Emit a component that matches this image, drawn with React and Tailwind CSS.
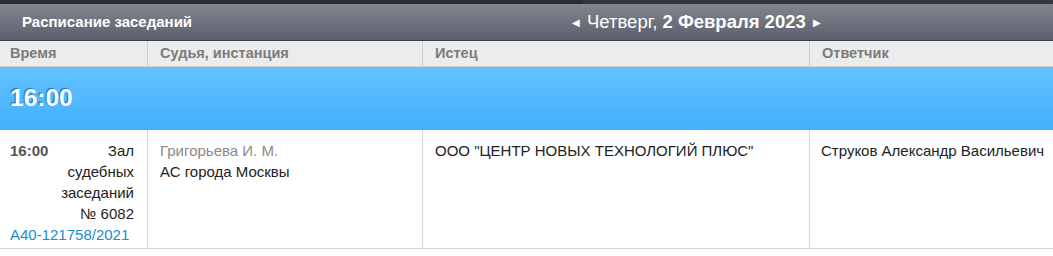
import React from "react";

const cols = "grid grid-cols-[148px_275px_387px_1fr]";

const App = () => {
  return (
    <div className="w-[1053px] h-[256px] bg-white font-['Liberation_Sans',Arial,sans-serif] overflow-hidden">
      {/* top dark strip */}
      <div className="flex h-[4px]">
        <div className="w-[583px] bg-[#2a2c33]" />
        <div className="flex-1 bg-[#343641]" />
      </div>

      {/* title bar */}
      <div className="relative flex items-center h-[37px] bg-gradient-to-b from-[#80858f] to-[#5c606c] border-b border-[#3b3e48]">
        <div className="pl-[22px] text-[15px] font-bold text-white">Расписание заседаний</div>
        <div className="absolute left-[572px] top-0 h-full flex items-center text-white text-[18.5px]">
          <span className="text-[10px] mr-[7px]">◀</span>
          <span>Четверг,&nbsp;</span>
          <span className="font-bold">2 Февраля 2023</span>
          <span className="text-[10px] ml-[7px]">▶</span>
        </div>
      </div>

      {/* column headers */}
      <div className={`${cols} h-[26px] bg-[#ececec] border-b border-[#cfcfcf] text-[14.5px] font-bold text-[#7b7b7b]`}>
        <div className="flex items-center pl-[10px] border-r border-[#cfcfcf]">Время</div>
        <div className="flex items-center pl-[12px] border-r border-[#cfcfcf]">Судья, инстанция</div>
        <div className="flex items-center pl-[12px] border-r border-[#cfcfcf]">Истец</div>
        <div className="flex items-center pl-[12px]">Ответчик</div>
      </div>

      {/* time band */}
      <div className="flex items-center h-[63px] bg-gradient-to-b from-[#64c2ff] to-[#43affc] pl-[10px]">
        <span className="text-white font-bold text-[24.5px] [text-shadow:-1px_-1px_1px_#1a6fb0]">16:00</span>
      </div>

      {/* row */}
      <div className={`${cols} h-[119px] border-b border-[#d6d6d6] text-[15px] text-[#222] leading-[21px]`}>
        <div className="pt-[10px] pl-[10px] pr-[13px] border-r border-[#d6d6d6]">
          <div className="flex justify-between">
            <span className="font-bold text-[#555]">16:00</span>
            <span className="text-right">Зал</span>
          </div>
          <div className="text-right">
            судебных
            <br />
            заседаний
            <br />№ 6082
          </div>
          <div className="text-[#1a8ccd]">А40-121758/2021</div>
        </div>
        <div className="pt-[10px] pl-[12px] border-r border-[#d6d6d6]">
          <div className="text-[#8a8a8a]">Григорьева И. М.</div>
          <div>АС города Москвы</div>
        </div>
        <div className="pt-[10px] pl-[12px] border-r border-[#d6d6d6]">ООО "ЦЕНТР НОВЫХ ТЕХНОЛОГИЙ ПЛЮС"</div>
        <div className="pt-[10px] pl-[11px]">Струков Александр Васильевич</div>
      </div>
    </div>
  );
};

export default App;
